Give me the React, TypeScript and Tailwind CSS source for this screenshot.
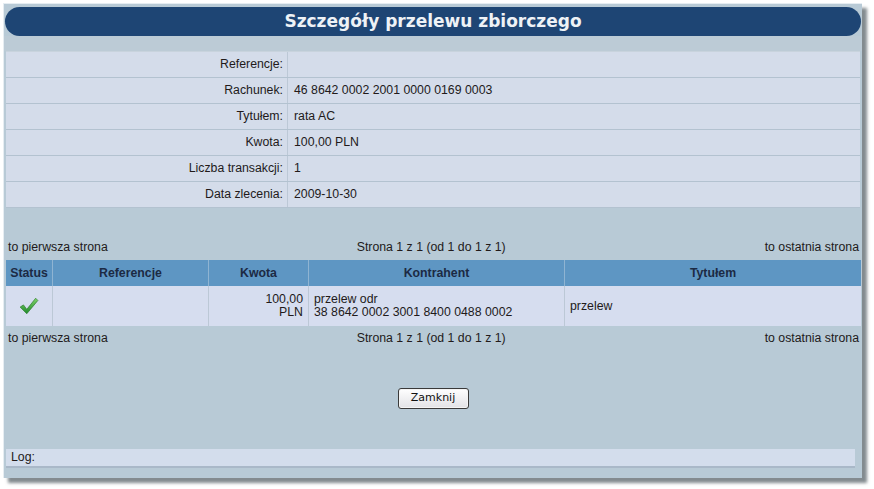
import React from 'react';

const details: [string, string][] = [
  ['Referencje:', ''],
  ['Rachunek:', '46 8642 0002 2001 0000 0169 0003'],
  ['Tytułem:', 'rata AC'],
  ['Kwota:', '100,00 PLN'],
  ['Liczba transakcji:', '1'],
  ['Data zlecenia:', '2009-10-30'],
];

function Pager() {
  return (
    <div className="flex h-[18px] items-end justify-between px-[2px] leading-none">
      <span>to pierwsza strona</span>
      <span className="mr-[10px]">Strona 1 z 1 (od 1 do 1 z 1)</span>
      <span>to ostatnia strona</span>
    </div>
  );
}

function Check() {
  return (
    <svg width="20" height="18" viewBox="0 0 18 16">
      <defs>
        <linearGradient id="g" x1="0" y1="0" x2="0" y2="1">
          <stop offset="0" stopColor="#7fd36a" />
          <stop offset="1" stopColor="#1f8a2a" />
        </linearGradient>
      </defs>
      <path d="M1 9 L4 7 L7 11 L15 1 L17 3 L7 15 Z" fill="url(#g)" stroke="#2a7a2a" strokeWidth="0.6" />
    </svg>
  );
}

export default function App() {
  return (
    <div className="h-[489px] w-[874px] bg-white pl-[3px] pt-[3px] font-['Liberation_Sans',Arial,sans-serif] text-[12.3px] text-[#221a1a]">
      <div className="h-[475px] w-[859px] border-l border-t border-[#e6edf2] bg-[#b8cad6] shadow-[5px_5px_3px_rgba(90,100,105,0.75)]">
        <div className="px-[1px] pt-[3px]">
          <div className="flex h-[29px] items-center justify-center rounded-full bg-[#1e4574] font-['DejaVu_Sans',Verdana,sans-serif] text-[17px] font-bold text-[#eef2f6]">
            Szczegóły przelewu zbiorczego
          </div>
        </div>
        <div className="h-[15px] bg-[#bccbd6]" />
        <div className="ml-[2px] mr-[2px] border-t border-[#c8d3dd]">
          {details.map(([k, v]) => (
            <div key={k} className="flex h-[26px] border-b border-[#b3c2d0] bg-[#d4dcea]">
              <div className="flex w-[282px] items-center justify-end border-r border-[#bcc8d6] pr-[4px]">{k}</div>
              <div className="flex items-center pl-[6px]">{v}</div>
            </div>
          ))}
        </div>
        <div className="h-[27px]" />
        <div className="ml-[2px] mr-[1px]">
          <Pager />
          <div className="mt-[7px] grid grid-cols-[47px_156px_100px_256px_1fr] text-center">
            <div className="flex h-[26px] items-center justify-center border-r border-[#8fb4d2] bg-[#5e96c3] font-bold text-[#1c2a44]">Status</div>
            <div className="flex h-[26px] items-center justify-center border-r border-[#8fb4d2] bg-[#5e96c3] font-bold text-[#1c2a44]">Referencje</div>
            <div className="flex h-[26px] items-center justify-center border-r border-[#8fb4d2] bg-[#5e96c3] font-bold text-[#1c2a44]">Kwota</div>
            <div className="flex h-[26px] items-center justify-center border-r border-[#8fb4d2] bg-[#5e96c3] font-bold text-[#1c2a44]">Kontrahent</div>
            <div className="flex h-[26px] items-center justify-center bg-[#5e96c3] font-bold text-[#1c2a44]">Tytułem</div>

            <div className="flex h-[40px] items-center justify-center border-r border-[#bcc8d6] bg-[#d6ddef]"><Check /></div>
            <div className="h-[40px] border-r border-[#bcc8d6] bg-[#d6ddef]" />
            <div className="flex h-[40px] flex-col items-end justify-center border-r border-[#bcc8d6] bg-[#d6ddef] pr-[5px] leading-[13px]">
              <span>100,00</span>
              <span>PLN</span>
            </div>
            <div className="flex h-[40px] flex-col items-start justify-center border-r border-[#bcc8d6] bg-[#d6ddef] pl-[5px] leading-[13px]">
              <span>przelew odr</span>
              <span>38 8642 0002 3001 8400 0488 0002</span>
            </div>
            <div className="flex h-[40px] items-center bg-[#d6ddef] pl-[5px]">przelew</div>
          </div>
          <Pager />
        </div>
        <div className="flex justify-center pt-[44px]">
          <button className="h-[21px] w-[71px] rounded-[3px] border border-[#3a3a3a] bg-gradient-to-b from-[#ffffff] to-[#e2e2e6] font-['DejaVu_Sans',Tahoma,sans-serif] text-[11px] text-[#111] shadow-[inset_0_0_0_1px_#f4f4f4]">
            Zamknij
          </button>
        </div>
        <div className="ml-[2px] mr-[7px] mt-[40px] flex h-[19px] items-center border-b-2 border-[#a9b8c8] bg-[#d3ddec] pl-[5px]">
          Log:
        </div>
      </div>
    </div>
  );
}
